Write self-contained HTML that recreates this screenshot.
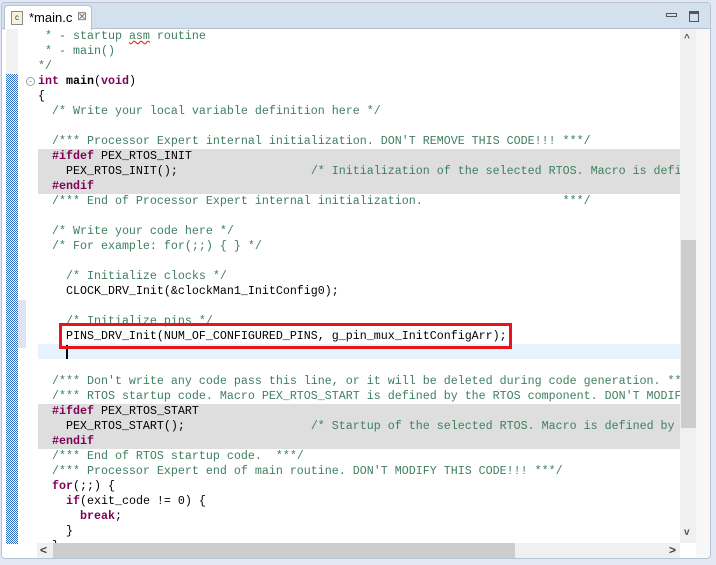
<!DOCTYPE html>
<html><head><meta charset="utf-8"><style>
*{margin:0;padding:0;box-sizing:border-box}
body{width:716px;height:565px;background:#e3e7f4;position:relative;overflow:hidden;font-family:"Liberation Sans",sans-serif}
#panel{position:absolute;left:1px;top:2px;width:710px;height:557px;background:#fff;border:1px solid #b8c4d4;border-radius:4px;overflow:hidden}
#hdr{position:absolute;left:0;top:0;width:710px;height:26px;background:#d3e1ef;border-bottom:1px solid #b5c1d1}
#tab{position:absolute;left:2px;top:2px;width:88px;height:25px;background:#fff;border:1px solid #b5c1d1;border-bottom:none;border-radius:4px 4px 0 0;font-size:13px;color:#000}
#gutter{position:absolute;left:4px;top:26px;width:12px;height:515px;background:#f2f2f2}
#hatch{position:absolute;left:4px;top:71px;width:12px;height:470px}
#code{position:absolute;left:0;top:26px;width:678px;height:514px;overflow:hidden}
.l{position:absolute;left:36px;height:15px;line-height:15px;font-family:"Liberation Mono",monospace;font-size:11.67px;white-space:pre;color:#000}
.c{color:#3f7f5f}.k{color:#7f0055;font-weight:bold}
.g{position:absolute;left:36px;width:642px;background:#dedede}
</style></head><body>
<div id="panel">
<div id="hdr">
<div id="tab"><span style="position:absolute;left:6px;top:5px;width:12px;height:14px;border:1px solid #8a8a8a;background:#f6f1d8;font-size:8px;line-height:12px;text-align:center;color:#335">c</span><span style="position:absolute;left:24px;top:4px">*main.c</span><span style="position:absolute;left:72px;top:3px;font-size:12px;color:#777">⊠</span></div>
<div style="position:absolute;left:664px;top:10px;width:11px;height:4px;border:1px solid #555"></div>
<div style="position:absolute;left:687px;top:8px;width:10px;height:11px;border:1px solid #555;border-top-width:3px"></div>
</div>
<div id="gutter"></div>
<svg id="hatch" width="12" height="470" shape-rendering="crispEdges"><defs><pattern id="p" width="2" height="2" patternUnits="userSpaceOnUse"><rect width="2" height="2" fill="#fff"/><rect width="1" height="1" fill="#2f6fc8"/><rect x="1" y="1" width="1" height="1" fill="#2f6fc8"/></pattern></defs><rect width="12" height="470" fill="url(#p)"/></svg>
<div style="position:absolute;left:16px;top:297px;width:8px;height:48px;background:#dfe2f0"></div>
<div id="code">
<div class="g" style="top:120px;height:45px"></div>
<div class="g" style="top:375px;height:45px"></div>
<div style="position:absolute;left:36px;top:315px;width:642px;height:15px;background:#e8f2fe"></div>
<div style="position:absolute;left:24px;top:48px;width:9px;height:9px;border:1px solid #8aa;border-radius:50%;font-size:8px;line-height:7px;text-align:center;color:#555">-</div>
<div class="l c" style="top:0"> * - startup <span style="text-decoration:underline wavy #e33">asm</span> routine</div>
<div class="l c" style="top:15px"> * - main()</div>
<div class="l c" style="top:30px">*/</div>
<div class="l" style="top:45px"><span class="k">int</span> <b>main</b>(<span class="k">void</span>)</div>
<div class="l" style="top:60px">{</div>
<div class="l c" style="top:75px">  /* Write your local variable definition here */</div>
<div class="l c" style="top:105px">  /*** Processor Expert internal initialization. DON'T REMOVE THIS CODE!!! ***/</div>
<div class="l" style="top:120px">  <span class="k">#ifdef</span> PEX_RTOS_INIT</div>
<div class="l" style="top:135px">    PEX_RTOS_INIT();                   <span class="c">/* Initialization of the selected RTOS. Macro is defined by the RTOS</span></div>
<div class="l" style="top:150px">  <span class="k">#endif</span></div>
<div class="l c" style="top:165px">  /*** End of Processor Expert internal initialization.                    ***/</div>
<div class="l c" style="top:195px">  /* Write your code here */</div>
<div class="l c" style="top:210px">  /* For example: for(;;) { } */</div>
<div class="l c" style="top:240px">    /* Initialize clocks */</div>
<div class="l" style="top:255px">    CLOCK_DRV_Init(&amp;clockMan1_InitConfig0);</div>
<div class="l c" style="top:285px">    /* Initialize pins */</div>
<div class="l" style="top:300px">    PINS_DRV_Init(NUM_OF_CONFIGURED_PINS, g_pin_mux_InitConfigArr);</div>
<div style="position:absolute;left:64px;top:316px;width:2px;height:14px;background:#000"></div>
<div class="l c" style="top:345px">  /*** Don't write any code pass this line, or it will be deleted during code generation. ***/</div>
<div class="l c" style="top:360px">  /*** RTOS startup code. Macro PEX_RTOS_START is defined by the RTOS component. DON'T MODIFY THIS CODE!!! ***/</div>
<div class="l" style="top:375px">  <span class="k">#ifdef</span> PEX_RTOS_START</div>
<div class="l" style="top:390px">    PEX_RTOS_START();                  <span class="c">/* Startup of the selected RTOS. Macro is defined by the RTOS component. */</span></div>
<div class="l" style="top:405px">  <span class="k">#endif</span></div>
<div class="l c" style="top:420px">  /*** End of RTOS startup code.  ***/</div>
<div class="l c" style="top:435px">  /*** Processor Expert end of main routine. DON'T MODIFY THIS CODE!!! ***/</div>
<div class="l" style="top:450px">  <span class="k">for</span>(;;) {</div>
<div class="l" style="top:465px">    <span class="k">if</span>(exit_code != 0) {</div>
<div class="l" style="top:480px">      <span class="k">break</span>;</div>
<div class="l" style="top:495px">    }</div>
<div class="l" style="top:510px">  }</div>
<div style="position:absolute;left:57px;top:294px;width:453px;height:26px;border:3px solid #e8141c"></div>
</div>
<div style="position:absolute;left:678px;top:26px;width:16px;height:514px;background:#f0f0f0"></div>
<div style="position:absolute;left:679px;top:237px;width:15px;height:188px;background:#cdcdcd"></div>
<div style="position:absolute;left:682px;top:30px;font-size:10px;color:#555;font-weight:bold">^</div>
<div style="position:absolute;left:682px;top:524px;font-size:10px;color:#555;font-weight:bold">v</div>
<div style="position:absolute;left:694px;top:26px;width:16px;height:531px;background:#f7f7f7"></div>
<div style="position:absolute;left:35px;top:540px;width:643px;height:16px;background:#f0f0f0"></div>
<div style="position:absolute;left:51px;top:540px;width:462px;height:15px;background:#cdcdcd"></div>
<div style="position:absolute;left:38px;top:540px;font-size:12px;color:#444;font-weight:bold">&lt;</div>
<div style="position:absolute;left:667px;top:540px;font-size:12px;color:#444;font-weight:bold">&gt;</div>
</div>
</body></html>
